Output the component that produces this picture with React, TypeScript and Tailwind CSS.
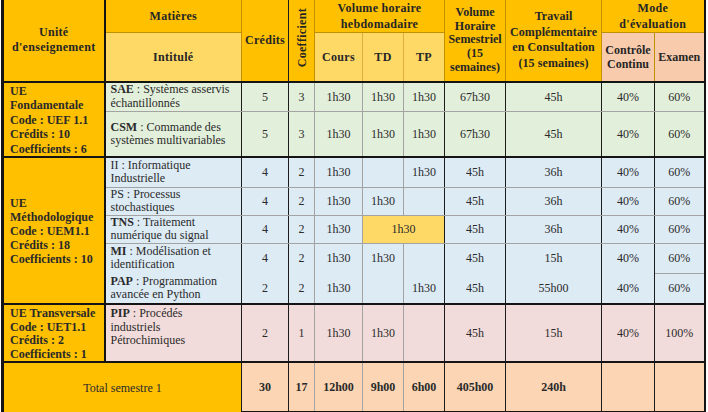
import React from "react";

const BK = "border-r border-r-[#1c1c1c]";
const GR = "border-r border-r-[#a3a3a3]";
const RE = "border-r-2 border-r-[#141414]";
const RC = [BK, GR, GR, GR, BK, BK, BK, BK, RE];
const BOT_G = "border-b border-b-[#a3a3a3]";
const BOT_K = "border-b-2 border-b-[#141414]";
const LEFT = "border-l-[3px] border-l-[#141414] border-r-2 border-r-[#141414]";
const HG = "border-r border-r-[#bf9000]";
const HGL = "border-r border-r-[#dcae3c]";
const HBG = "border-b border-b-[#bf9000]";

function Vals({
  vals,
  bottom,
  lastBottom,
  tdMerge,
}: {
  vals: string[];
  bottom: string;
  lastBottom?: string;
  tdMerge?: boolean;
}) {
  const cells: React.ReactNode[] = [];
  for (let i = 0; i < 9; i++) {
    if (tdMerge && i === 3) {
      cells.push(
        <td key={i} colSpan={2} className={`bg-[#ffd966] text-center align-middle ${RC[4]} ${bottom}`}>
          {vals[i]}
        </td>
      );
      i++;
      continue;
    }
    const b = i === 8 && lastBottom !== undefined ? lastBottom : bottom;
    cells.push(
      <td key={i} className={`text-center align-middle ${RC[i]} ${b}`}>
        {vals[i]}
      </td>
    );
  }
  return <>{cells}</>;
}

function Mat({ code, rest, bold = true, bottom, top }: { code: string; rest: React.ReactNode; bold?: boolean; bottom: string; top?: boolean }) {
  return (
    <td className={`text-left pl-[5px] whitespace-nowrap leading-[13.5px] ${top ? "align-top pt-[2px]" : "align-middle"} ${BK} ${bottom}`}>
      <span className={bold ? "font-bold" : ""}>{code}</span> : {rest}
    </td>
  );
}

export default function App() {
  return (
    <div className="w-[708px] h-[412px] bg-white overflow-hidden pl-[1px] font-['Liberation_Serif','Times_New_Roman',serif] text-[12px] text-[#2a2a2a]">
      <table className="table-fixed border-collapse w-[702px]">
        <colgroup>
          <col className="w-[102px]" />
          <col className="w-[137px]" />
          <col className="w-[47px]" />
          <col className="w-[26px]" />
          <col className="w-[48px]" />
          <col className="w-[41px]" />
          <col className="w-[41px]" />
          <col className="w-[61px]" />
          <col className="w-[96px]" />
          <col className="w-[53px]" />
          <col className="w-[50px]" />
        </colgroup>
        <thead className="font-bold text-[#262626] tracking-[0.3px]">
          <tr className="h-[32px] bg-[#ffc000]">
            <th rowSpan={2} className={`font-bold text-center align-middle leading-[15px] ${LEFT} ${BOT_K}`}>
              Unité
              <br />
              d'enseignement
            </th>
            <th className={`font-bold text-center align-middle ${HG} ${HBG}`}>Matières</th>
            <th rowSpan={2} className={`font-bold text-center align-middle ${BK} ${BOT_K}`}>Crédits</th>
            <th rowSpan={2} className={`font-bold text-center align-middle ${HG} ${BOT_K}`}>
              <span className="inline-block [writing-mode:vertical-rl] rotate-180 leading-[14px]">Coefficient</span>
            </th>
            <th colSpan={3} className={`font-bold text-center align-middle leading-[16px] ${HG} ${HBG}`}>
              Volume horaire
              <br />
              hebdomadaire
            </th>
            <th rowSpan={2} className={`font-bold text-center align-middle leading-[13.6px] tracking-normal whitespace-nowrap ${HG} ${BOT_K}`}>
              Volume
              <br />
              Horaire
              <br />
              Semestriel
              <br />
              (15
              <br />
              semaines)
            </th>
            <th rowSpan={2} className={`font-bold text-center align-middle leading-[15.5px] tracking-[0.1px] whitespace-nowrap ${HG} ${BOT_K}`}>
              Travail
              <br />
              Complémentaire
              <br />
              en Consultation
              <br />
              (15 semaines)
            </th>
            <th colSpan={2} className={`font-bold text-center align-middle leading-[16px] ${RE} ${HBG}`}>
              Mode
              <br />
              d'évaluation
            </th>
          </tr>
          <tr className="h-[49px]">
            <th className={`font-bold text-center align-middle bg-[#ffd966] ${HG} ${BOT_K}`}>Intitulé</th>
            <th className={`font-bold text-center align-middle bg-[#ffd966] ${HGL} ${BOT_K}`}>Cours</th>
            <th className={`font-bold text-center align-middle bg-[#ffd966] ${HGL} ${BOT_K}`}>TD</th>
            <th className={`font-bold text-center align-middle bg-[#ffd966] ${HG} ${BOT_K}`}>TP</th>
            <th className={`font-bold text-center align-middle bg-[#f8cbad] leading-[14px] tracking-normal ${HG} ${BOT_K}`}>
              Contrôle
              <br />
              Continu
            </th>
            <th className={`font-bold text-center align-middle bg-[#f8cbad] tracking-normal ${RE} ${BOT_K}`}>Examen</th>
          </tr>
        </thead>
        <tbody>
          {/* UE Fondamentale */}
          <tr className="h-[29px] bg-[#e2efda]">
            <td rowSpan={2} className={`bg-[#ffc000] font-bold text-left align-top pl-[6px] pt-[1px] leading-[14.5px] whitespace-nowrap ${LEFT} ${BOT_K}`}>
              UE
              <br />
              Fondamentale
              <br />
              Code : UEF 1.1
              <br />
              Crédits : 10
              <br />
              Coefficients : 6
            </td>
            <Mat code="SAE" rest={<>Systèmes asservis<br />échantillonnés</>} bottom={BOT_G} />
            <Vals vals={["5", "3", "1h30", "1h30", "1h30", "67h30", "45h", "40%", "60%"]} bottom={BOT_G} />
          </tr>
          <tr className="h-[43px] bg-[#e2efda]">
            <Mat code="CSM" rest={<>Commande des<br />systèmes multivariables</>} bottom={BOT_K} />
            <Vals vals={["5", "3", "1h30", "1h30", "1h30", "67h30", "45h", "40%", "60%"]} bottom={BOT_K} />
          </tr>

          {/* UE Méthodologique */}
          <tr className="h-[30px] bg-[#ddebf5]">
            <td rowSpan={5} className={`bg-[#ffc000] font-bold text-left align-middle pl-[6px] leading-[14px] whitespace-nowrap ${LEFT} ${BOT_K}`}>
              UE
              <br />
              Méthodologique
              <br />
              Code : UEM1.1
              <br />
              Crédits : 18
              <br />
              Coefficients : 10
            </td>
            <Mat code="II" bold={false} rest={<>Informatique<br />Industrielle</>} bottom={BOT_G} />
            <Vals vals={["4", "2", "1h30", "", "1h30", "45h", "36h", "40%", "60%"]} bottom={BOT_G} />
          </tr>
          <tr className="h-[28px] bg-[#ddebf5]">
            <Mat code="PS" bold={false} rest={<>Processus<br />stochastiques</>} bottom={BOT_G} />
            <Vals vals={["4", "2", "1h30", "1h30", "", "45h", "36h", "40%", "60%"]} bottom={BOT_G} />
          </tr>
          <tr className="h-[28px] bg-[#ddebf5]">
            <Mat code="TNS" rest={<>Traitement<br />numérique du signal</>} bottom={BOT_G} />
            <Vals vals={["4", "2", "1h30", "1h30", "", "45h", "36h", "40%", "60%"]} bottom={BOT_G} tdMerge />
          </tr>
          <tr className="h-[30px] bg-[#ddebf5]">
            <Mat code="MI" rest={<>Modélisation et<br />identification</>} bottom="" />
            <Vals vals={["4", "2", "1h30", "1h30", "", "45h", "15h", "40%", "60%"]} bottom="" lastBottom={BOT_G} />
          </tr>
          <tr className="h-[31px] bg-[#ddebf5]">
            <Mat code="PAP" rest={<>Programmation<br />avancée en Python</>} bottom={BOT_K} />
            <Vals vals={["2", "2", "1h30", "", "1h30", "45h", "55h00", "40%", "60%"]} bottom={BOT_K} />
          </tr>

          {/* UE Transversale */}
          <tr className="h-[55px] bg-[#f2dcdb]">
            <td className={`bg-[#ffc000] font-bold text-left align-top pl-[6px] pt-[2px] leading-[13.5px] whitespace-nowrap ${LEFT} ${BOT_K}`}>
              UE Transversale
              <br />
              Code : UET1.1
              <br />
              Crédits : 2
              <br />
              Coefficients : 1
            </td>
            <Mat code="PIP" top rest={<>Procédés<br />industriels<br />Pétrochimiques</>} bottom={BOT_K} />
            <Vals vals={["2", "1", "1h30", "1h30", "", "45h", "15h", "40%", "100%"]} bottom={BOT_K} />
          </tr>

          {/* Total */}
          <tr className="h-[50px] bg-[#fcd5b4] font-bold">
            <td colSpan={2} className={`bg-[#ffc000] font-normal text-center align-middle border-l-[3px] border-l-[#141414] ${BK}`}>
              Total semestre 1
            </td>
            <Vals vals={["30", "17", "12h00", "9h00", "6h00", "405h00", "240h", "", ""]} bottom="border-b-[3px] border-b-[#141414]" />
          </tr>
        </tbody>
      </table>
    </div>
  );
}
